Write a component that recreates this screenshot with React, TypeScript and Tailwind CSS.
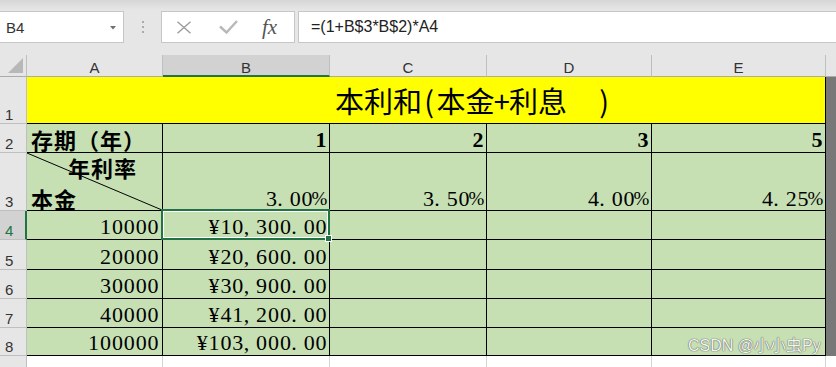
import React from "react";

function Mono({ text, bold = false }: { text: string; bold?: boolean }) {
  return (
    <span
      className={
        bold
          ? "flex font-['Liberation_Serif',serif] text-[22px] leading-[22px] font-bold text-black"
          : "flex font-['Liberation_Serif',serif] text-[22px] leading-[22px] text-black"
      }
    >
      {text.split("").map((c, i) => (
        <span
          key={i}
          className={
            c === "," || c === "."
              ? "flex w-[11.9px] justify-start"
              : c === "%"
              ? "flex w-[13px] justify-center text-[19px]"
              : "flex w-[11.9px] justify-center"
          }
        >
          {c}
        </span>
      ))}
    </span>
  );
}

function Title() {
  const full = "flex w-[29px] justify-center";
  const half = "flex w-[14.5px] justify-center";
  return (
    <div className="flex font-['Noto_Sans_CJK_SC',sans-serif] text-[29px] leading-[29px] text-black">
      <span className={full}>本</span>
      <span className={full}>利</span>
      <span className={full}>和</span>
      <span className={half}>(</span>
      <span className={full}>本</span>
      <span className={full}>金</span>
      <span className={half}>+</span>
      <span className={full}>利</span>
      <span className={full}>息</span>
      <span className="ml-[30px] flex w-[14.5px] justify-center">)</span>
    </div>
  );
}

const rowHdr =
  "flex items-end pl-[5px] bg-[#e6e6e6] border-r border-b border-[#bfbfbf] font-['Liberation_Sans',sans-serif] text-[15px] leading-[17px] text-[#333]";
const rowHdrSel =
  "flex items-end pl-[5px] bg-[#d2d2d2] border-r-2 border-r-[#217346] border-b border-b-[#bfbfbf] font-['Liberation_Sans',sans-serif] text-[15px] leading-[17px] text-[#217346]";
const colHdr =
  "flex justify-center items-start pt-[4px] bg-[#e6e6e6] border-r border-r-[#bfbfbf] border-b border-b-[#ababab] font-['Liberation_Sans',sans-serif] text-[15px] leading-[17px] text-[#333]";
const colHdrSel =
  "flex justify-center items-start pt-[4px] bg-[#d2d2d2] border-r border-r-[#bfbfbf] border-b-2 border-b-[#217346] font-['Liberation_Sans',sans-serif] text-[15px] leading-[17px] text-[#333]";

const numCell = "flex items-end justify-end pr-[2px] pb-[1px] bg-[#c6e0b4] border-r border-b border-black";
const numCellA = "flex items-end justify-end pr-[3px] pb-[1px] bg-[#c6e0b4] border-r border-b border-black";
const pctCell = "flex items-end justify-end pr-[3px] bg-[#c6e0b4] border-r border-b border-black";
const emptyCell = "bg-[#c6e0b4] border-r border-b border-black";
const cjk = "font-['Noto_Sans_CJK_SC',sans-serif] text-[22px] leading-[22px] font-bold tracking-[1px] text-black";

const data: [string, string, string][] = [
  ["5", "20000", "¥20,600.00"],
  ["6", "30000", "¥30,900.00"],
  ["7", "40000", "¥41,200.00"],
  ["8", "100000", "¥103,000.00"],
];

export default function App() {
  return (
    <div className="relative w-[836px] h-[367px] overflow-hidden bg-white">
      {/* Formula bar */}
      <div className="flex h-[55px] items-start pt-[11px] bg-[linear-gradient(#d6d6d6,#e6e6e6_10px)]">
        <div className="flex h-[32px] w-[124px] items-center justify-between border border-l-0 border-[#c6c6c6] bg-white pl-[6px] pr-[7px]">
          <span className="font-['Liberation_Sans',sans-serif] text-[15px] leading-[17px] text-[#333]">B4</span>
          <svg width="6" height="4" viewBox="0 0 6 4" className="mt-[1px]">
            <polygon points="0,0 6,0 3,3.5" fill="#707070" />
          </svg>
        </div>
        <div className="flex h-[32px] w-[37px] flex-col items-center justify-center gap-[3px] pl-[1px]">
          <span className="block h-[2px] w-[2px] bg-[#ababab]" />
          <span className="block h-[2px] w-[2px] bg-[#ababab]" />
          <span className="block h-[2px] w-[2px] bg-[#ababab]" />
        </div>
        <div className="flex h-[32px] w-[134px] items-center border border-[#c6c6c6] bg-white pl-[14px]">
          <svg width="16" height="13" viewBox="0 0 16 13">
            <path d="M1.5 0.8 L14.5 12.2 M14.5 0.8 L1.5 12.2" stroke="#9c9c9c" strokeWidth="1.4" fill="none" />
          </svg>
          <svg width="19" height="14" viewBox="0 0 19 14" className="ml-[27px]">
            <path d="M1 6.5 L7.5 12.5 L18 1" stroke="#b8b8b8" strokeWidth="2.4" fill="none" />
          </svg>
          <span className="ml-[24px] font-['Liberation_Serif',serif] text-[21px] italic leading-[21px] text-[#555]">fx</span>
        </div>
        <div className="ml-[3px] flex h-[32px] flex-1 items-center border border-r-0 border-[#c6c6c6] bg-white pl-[12px] font-['Liberation_Sans',sans-serif] text-[16px] leading-[18px] text-[#222]">
          =(1+B$3*B$2)*A4
        </div>
      </div>

      {/* Sheet grid */}
      <div className="grid grid-cols-[27px_136px_167px_157px_165px_174px_10px] grid-rows-[22px_47px_29px_58px_29px_30px_29px_29px_28px_11px]">
        <div className="col-start-7 row-start-2 row-span-8 bg-[#787878]" />

        {/* column headers */}
        <div className="bg-[#e6e6e6] border-r border-r-[#bfbfbf] border-b border-b-[#ababab]">
          <svg width="26" height="21" viewBox="0 0 26 21" className="block">
            <polygon points="23,3 23,18 8,18" fill="#b8b8b8" />
          </svg>
        </div>
        <div className={colHdr}>A</div>
        <div className={colHdrSel}>B</div>
        <div className={colHdr}>C</div>
        <div className={colHdr}>D</div>
        <div className={colHdr}>E</div>
        <div className="bg-[#e6e6e6] border-b border-b-[#ababab]" />

        {/* row 1 */}
        <div className={rowHdr}>1</div>
        <div className="col-span-5 flex items-start bg-[#ffff00] border-r border-b border-black pt-[9px] pl-[308px]">
          <Title />
        </div>

        {/* row 2 */}
        <div className={rowHdr}>2</div>
        <div className="flex items-start pt-[4px] pl-[4px] bg-[#c6e0b4] border-r border-b border-black">
          <span className={cjk}>存期（年）</span>
        </div>
        <div className={numCell}><Mono text="1" bold /></div>
        <div className={numCell}><Mono text="2" bold /></div>
        <div className={numCell}><Mono text="3" bold /></div>
        <div className={numCell}><Mono text="5" bold /></div>

        {/* row 3 */}
        <div className={rowHdr}>3</div>
        <div className="relative flex flex-col justify-between pt-[3px] pb-[1px] bg-[#c6e0b4] border-r border-b border-black">
          <svg className="absolute inset-0 h-full w-full" viewBox="0 0 135 57" preserveAspectRatio="none">
            <line x1="0" y1="0" x2="135" y2="57" stroke="#000" strokeWidth="1" />
          </svg>
          <span className={"pl-[41px] " + cjk}>年利率</span>
          <span className={"pl-[4px] " + cjk}>本金</span>
        </div>
        <div className={pctCell}><Mono text="3.00%" /></div>
        <div className={pctCell}><Mono text="3.50%" /></div>
        <div className={pctCell}><Mono text="4.00%" /></div>
        <div className={pctCell}><Mono text="4.25%" /></div>

        {/* row 4 (selected) */}
        <div className={rowHdrSel}>4</div>
        <div className={numCellA}><Mono text="10000" /></div>
        <div className={"relative " + numCell}>
          <Mono text="¥10,300.00" />
          <div className="absolute -left-[2px] -top-[2px] -right-[1px] -bottom-[1px] z-10 border-2 border-[#217346] shadow-[inset_0_0_0_1px_#ffffff]" />
          <div className="absolute -right-[3px] -bottom-[3px] z-20 h-[7px] w-[7px] border border-white bg-[#217346]" />
        </div>
        <div className={emptyCell} />
        <div className={emptyCell} />
        <div className={emptyCell} />

        {data.map(([n, a, b]) => (
          <React.Fragment key={n}>
            <div className={rowHdr}>{n}</div>
            <div className={numCellA}><Mono text={a} /></div>
            <div className={numCell}><Mono text={b} /></div>
            <div className={emptyCell} />
            <div className={emptyCell} />
            <div className={emptyCell} />
          </React.Fragment>
        ))}

        {/* empty bottom row */}
        <div className="bg-[#e6e6e6] border-r border-[#bfbfbf]" />
        <div className="bg-white border-r border-[#d4d4d4]" />
        <div className="bg-white border-r border-[#d4d4d4]" />
        <div className="bg-white border-r border-[#d4d4d4]" />
        <div className="bg-white border-r border-[#d4d4d4]" />
        <div className="bg-white border-r border-[#d4d4d4]" />
        <div className="bg-white" />
      </div>

      {/* watermark */}
      <div className="absolute left-[688px] top-[337px] font-['Liberation_Sans','Noto_Sans_CJK_SC',sans-serif] text-[16px] leading-[18px] text-[#f4f4f4] [text-shadow:0_0_1px_#555,0_0_1px_#555]">
        CSDN @小小虫Py
      </div>
    </div>
  );
}
